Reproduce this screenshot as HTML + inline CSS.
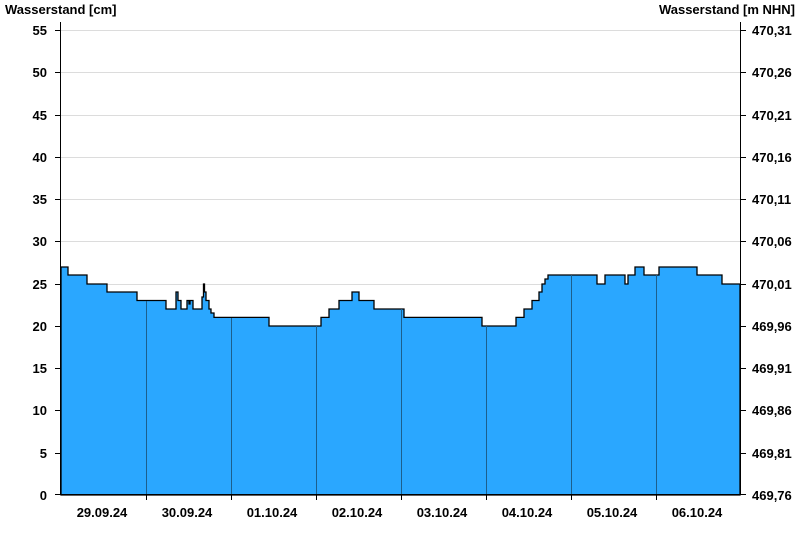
<!DOCTYPE html>
<html><head><meta charset="utf-8"><style>
body{margin:0;background:#fff;width:800px;height:550px;overflow:hidden}
svg text{font-family:"Liberation Sans",Arial,sans-serif;font-weight:bold;font-size:13px;fill:#000}
</style></head><body>
<svg width="800" height="550" viewBox="0 0 800 550" xmlns="http://www.w3.org/2000/svg">
<g stroke="#dcdcdc" stroke-width="1">
<line x1="61" y1="30.5" x2="740" y2="30.5"/><line x1="61" y1="72.5" x2="740" y2="72.5"/><line x1="61" y1="115.5" x2="740" y2="115.5"/><line x1="61" y1="157.5" x2="740" y2="157.5"/><line x1="61" y1="199.5" x2="740" y2="199.5"/><line x1="61" y1="241.5" x2="740" y2="241.5"/><line x1="61" y1="284.5" x2="740" y2="284.5"/><line x1="61" y1="326.5" x2="740" y2="326.5"/><line x1="61" y1="368.5" x2="740" y2="368.5"/><line x1="61" y1="410.5" x2="740" y2="410.5"/><line x1="61" y1="453.5" x2="740" y2="453.5"/>
</g>
<path fill="#2aa7ff" stroke="#000" stroke-width="1.3" d="M61,495 V267 H68 V275 H87 V284 H107 V292 H137 V300.5 H166 V309 H176 V292 H178 V300.5 H181 V309 H187 V300.5 H189 V304 H190 V300.5 H193 V309 H202 V297 H203.5 V284 H204.5 V292 H206 V300.5 H209 V309 H211 V313 H214 V317.4 H269 V326 H321 V317.4 H329 V309 H339 V300.5 H352 V292 H359 V300.5 H374 V309 H404 V317.4 H482 V326 H516 V317.4 H524 V309 H532 V300.5 H539 V292 H542 V284 H545 V279 H548 V275 H597 V284 H605 V275 H625 V284 H628 V275 H635 V267 H644 V275 H659 V267 H697 V275 H722 V284 H740 V495 Z"/>
<g stroke="#1c5f8c" stroke-width="1">
<line x1="146.5" y1="301" x2="146.5" y2="495"/><line x1="231.5" y1="318" x2="231.5" y2="495"/><line x1="316.5" y1="326" x2="316.5" y2="495"/><line x1="401.5" y1="309" x2="401.5" y2="495"/><line x1="486.5" y1="326" x2="486.5" y2="495"/><line x1="571.5" y1="275" x2="571.5" y2="495"/><line x1="656.5" y1="275" x2="656.5" y2="495"/>
</g>
<g stroke="#000" stroke-width="1">
<line x1="60.5" y1="22" x2="60.5" y2="495"/><line x1="740.5" y1="22" x2="740.5" y2="495"/><line x1="60" y1="494.5" x2="741" y2="494.5"/>
<line x1="55" y1="30.5" x2="61" y2="30.5"/><line x1="55" y1="72.5" x2="61" y2="72.5"/><line x1="55" y1="115.5" x2="61" y2="115.5"/><line x1="55" y1="157.5" x2="61" y2="157.5"/><line x1="55" y1="199.5" x2="61" y2="199.5"/><line x1="55" y1="241.5" x2="61" y2="241.5"/><line x1="55" y1="284.5" x2="61" y2="284.5"/><line x1="55" y1="326.5" x2="61" y2="326.5"/><line x1="55" y1="368.5" x2="61" y2="368.5"/><line x1="55" y1="410.5" x2="61" y2="410.5"/><line x1="55" y1="453.5" x2="61" y2="453.5"/><line x1="55" y1="494.5" x2="61" y2="494.5"/>
<line x1="740" y1="30.5" x2="746" y2="30.5"/><line x1="740" y1="72.5" x2="746" y2="72.5"/><line x1="740" y1="115.5" x2="746" y2="115.5"/><line x1="740" y1="157.5" x2="746" y2="157.5"/><line x1="740" y1="199.5" x2="746" y2="199.5"/><line x1="740" y1="241.5" x2="746" y2="241.5"/><line x1="740" y1="284.5" x2="746" y2="284.5"/><line x1="740" y1="326.5" x2="746" y2="326.5"/><line x1="740" y1="368.5" x2="746" y2="368.5"/><line x1="740" y1="410.5" x2="746" y2="410.5"/><line x1="740" y1="453.5" x2="746" y2="453.5"/><line x1="740" y1="494.5" x2="746" y2="494.5"/>
<line x1="146.5" y1="495" x2="146.5" y2="500"/><line x1="231.5" y1="495" x2="231.5" y2="500"/><line x1="316.5" y1="495" x2="316.5" y2="500"/><line x1="401.5" y1="495" x2="401.5" y2="500"/><line x1="486.5" y1="495" x2="486.5" y2="500"/><line x1="571.5" y1="495" x2="571.5" y2="500"/><line x1="656.5" y1="495" x2="656.5" y2="500"/>
</g>
<text x="5" y="14">Wasserstand [cm]</text>
<text x="795" y="14" text-anchor="end">Wasserstand [m NHN]</text>
<g text-anchor="end">
<text x="47" y="35">55</text><text x="47" y="77">50</text><text x="47" y="120">45</text><text x="47" y="162">40</text><text x="47" y="204">35</text><text x="47" y="246">30</text><text x="47" y="289">25</text><text x="47" y="331">20</text><text x="47" y="373">15</text><text x="47" y="415">10</text><text x="47" y="458">5</text><text x="47" y="500">0</text>
</g>
<g>
<text x="752" y="35">470,31</text><text x="752" y="77">470,26</text><text x="752" y="120">470,21</text><text x="752" y="162">470,16</text><text x="752" y="204">470,11</text><text x="752" y="246">470,06</text><text x="752" y="289">470,01</text><text x="752" y="331">469,96</text><text x="752" y="373">469,91</text><text x="752" y="415">469,86</text><text x="752" y="458">469,81</text><text x="752" y="500">469,76</text>
</g>
<g text-anchor="middle">
<text x="102" y="517">29.09.24</text><text x="187" y="517">30.09.24</text><text x="272" y="517">01.10.24</text><text x="357" y="517">02.10.24</text><text x="442" y="517">03.10.24</text><text x="527" y="517">04.10.24</text><text x="612" y="517">05.10.24</text><text x="697" y="517">06.10.24</text>
</g>
</svg>
</body></html>
